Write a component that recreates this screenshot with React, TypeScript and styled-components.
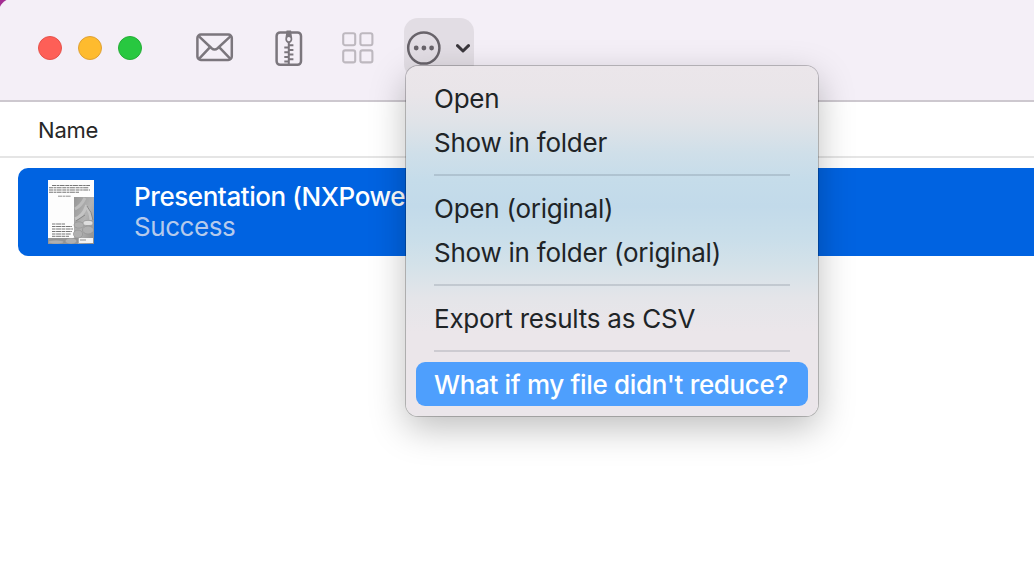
import React from 'react';
import styled, { createGlobalStyle } from 'styled-components';

const GlobalStyle = createGlobalStyle`
  * {
    box-sizing: border-box;
  }

  body {
    margin: 0;
    overflow: hidden;
    background: #a32d92;
    font-family: Inter, 'Liberation Sans', sans-serif;
  }
`;

// the window starts slightly outside of the viewport, only the tip of its rounded corner is visible
const Window = styled.div`
  width: 1037px;
  height: 584px;
  margin: -3px 0 0 -3px;
  padding: 3px 0 0 3px;
  border-top-left-radius: 20px;
  overflow: hidden;
  background: linear-gradient(#f4eff7 104px, #fff 104px);
`;

const Toolbar = styled.header`
  display: flex;
  align-items: center;
  height: 102px;
  padding: 0 0 4px 38px;
  border-bottom: 2px solid #cdc8cf;
`;

const TrafficLights = styled.div`
  display: flex;
  gap: 16px;
  margin-right: 54px;
`;

const Light = styled.span<{ $color: string; $edge: string }>`
  width: 24px;
  height: 24px;
  border-radius: 50%;
  border: 1px solid ${(props) => props.$edge};
  background: ${(props) => props.$color};
`;

const ToolIcon = styled.span<{ $gap: number; $color?: string }>`
  display: flex;
  margin-right: ${(props) => props.$gap}px;
  color: ${(props) => props.$color ?? '#7b767d'};
`;

const MoreButton = styled.div`
  position: relative;
  display: flex;
  align-items: center;
  gap: 14px;
  width: 70px;
  height: 60px;
  padding-left: 2px;
  border-radius: 14px;
  background: #e2dde4;
  color: #68636a;
`;

const Menu = styled.div`
  position: absolute;
  z-index: 1;
  top: 48px;
  left: 2px;
  width: 412px;
  padding: 10px;
  border-radius: 12px;
  background: linear-gradient(
    #ebe6ea 0,
    #e9e5e9 28px,
    #dfe3e8 58px,
    #cfdfe9 88px,
    #c5dcea 115px,
    #c2daea 140px,
    #c9deea 172px,
    #d5e2e9 202px,
    #e4e5e9 232px,
    #ebe6ea 266px
  );
  box-shadow:
    0 0 0 1px rgba(0, 0, 0, 0.22),
    0 12px 36px rgba(0, 0, 0, 0.26);
`;

const MenuItem = styled.div<{ $active?: boolean }>`
  height: 44px;
  padding: 0 18px;
  border-radius: 9px;
  line-height: 46px;
  font-size: 26px;
  font-weight: ${(props) => (props.$active ? 500 : 400)};
  letter-spacing: ${(props) => (props.$active ? -0.34 : -0.24)}px;
  white-space: nowrap;
  color: ${(props) => (props.$active ? '#fff' : '#202427')};
  background: ${(props) => (props.$active ? '#4e9ffd' : 'transparent')};
`;

const Divider = styled.div`
  height: 2px;
  margin: 10px 18px;
  background: rgba(60, 70, 90, 0.17);
`;

const ColumnHeader = styled.div`
  height: 56px;
  padding-left: 38px;
  border-bottom: 2px solid #e5e5e5;
  line-height: 57px;
  font-size: 22px;
  letter-spacing: -0.2px;
  color: #272727;
`;

const FileRow = styled.div`
  display: flex;
  align-items: center;
  height: 88px;
  margin: 10px 0 0 18px;
  padding-left: 30px;
  border-radius: 10px 0 0 10px;
  background: #0063e1;
`;

const FileInfo = styled.div`
  margin-left: 40px;
  font-size: 26px;
  line-height: 30px;
  white-space: nowrap;
`;

const FileName = styled.div`
  font-weight: 500;
  letter-spacing: -0.43px;
  color: #fff;
`;

const FileStatus = styled.div`
  letter-spacing: -0.45px;
  color: #b5caec;
`;

const MailIcon = () => (
  <svg width="38" height="30" viewBox="0 0 38 30" fill="none" stroke="currentColor" strokeWidth="2.5">
    <rect x="1.4" y="1.6" width="34.4" height="25.4" rx="3.5" />
    <path d="M3 3.4 L15.6 15.2 Q18.6 17.8 21.6 15.2 L34.4 3.4" />
    <path d="M3 25.8 L13.6 14.6 M34.4 25.8 L23.6 14.6" />
  </svg>
);

const ZipIcon = () => (
  <svg width="28" height="38" viewBox="0 0 28 38" fill="none" stroke="currentColor" strokeWidth="2.5">
    <rect x="1.6" y="3.4" width="24.4" height="32.4" rx="3.5" />
    <path d="M13.8 12 V35.5" strokeWidth="2" />
    <path
      d="M9.3 18.5 H13.8 M9.3 23.3 H13.8 M9.3 28 H13.8 M9.3 32.6 H13.8 M13.8 16.2 H18.4 M13.8 20.9 H18.4 M13.8 25.6 H18.4 M13.8 30.3 H18.4"
      strokeWidth="2"
    />
    <path d="M11.6 1.4 H16 L17.2 9 A3.5 4.2 0 1 1 10.4 9 Z" fill="currentColor" stroke="none" />
    <rect x="12.1" y="8" width="3.4" height="4.2" rx="1.6" fill="#f4eff7" stroke="none" />
  </svg>
);

const GridIcon = () => (
  <svg width="32" height="32" viewBox="0 0 32 32" fill="none" stroke="currentColor" strokeWidth="2.1">
    <rect x="1.2" y="1.2" width="12" height="12" rx="2" />
    <rect x="18.4" y="1.2" width="12" height="12" rx="2" />
    <rect x="1.2" y="18.4" width="12" height="12" rx="2" />
    <rect x="18.4" y="18.4" width="12" height="12" rx="2" />
  </svg>
);

const EllipsisIcon = () => (
  <svg width="36" height="36" viewBox="0 0 36 36">
    <circle cx="17.8" cy="18" r="15.6" fill="none" stroke="currentColor" strokeWidth="2.5" />
    <g fill="currentColor">
      <circle cx="10.2" cy="18" r="2.4" />
      <circle cx="17.9" cy="18" r="2.4" />
      <circle cx="25.6" cy="18" r="2.4" />
    </g>
  </svg>
);

const ChevronIcon = () => (
  <svg width="14" height="10" viewBox="0 0 14 10" fill="none" stroke="#3a363c" strokeWidth="2.9">
    <path d="M1.5 2.6 L7 8 L12.5 2.6" strokeLinecap="round" strokeLinejoin="round" />
  </svg>
);

const Thumbnail = () => (
  <svg width="46" height="64" viewBox="0 0 46 64">
    <defs>
      <linearGradient id="photo" x1="0" y1="0" x2="1" y2="1">
        <stop offset="0" stopColor="#959595" />
        <stop offset="0.5" stopColor="#b4b4b4" />
        <stop offset="1" stopColor="#8c8c8c" />
      </linearGradient>
    </defs>
    <rect width="46" height="64" fill="#fdfdfd" />
    <g stroke="#777" strokeWidth="1.1" strokeDasharray="4 0.6 2.5 0.5 5 0.7">
      <path d="M4 5.5 H42 M1 7.7 H41 M1 10 H42 M1 12.3 H31" />
      <path d="M10 16.2 H23" strokeWidth="0.8" />
    </g>
    <rect x="26" y="17" width="20" height="47" fill="url(#photo)" />
    <rect y="58" width="30" height="6" fill="#969696" />
    <path d="M27 29 Q33 26 37 18" stroke="#bdbdbd" strokeWidth="3" fill="none" />
    <path d="M27 39 Q35 36 38 27 Q42 30 43 40" stroke="#c4c4c4" strokeWidth="3" fill="none" />
    <path d="M39 26 Q44 32 45 40 M28 41 L37 35" stroke="#888" strokeWidth="1" fill="none" />
    <g fill="#b0b0b0" stroke="#8e8e8e" strokeWidth="0.6">
      <ellipse cx="31" cy="45" rx="5" ry="3.2" />
      <ellipse cx="40" cy="43" rx="5" ry="2.6" fill="#dedede" />
      <ellipse cx="40" cy="50" rx="5.6" ry="4" />
      <ellipse cx="30" cy="54" rx="4.6" ry="4" />
      <ellipse cx="8" cy="62" rx="8" ry="2" />
      <ellipse cx="23" cy="61" rx="6" ry="3" />
    </g>
    <path d="M0 42 H25 V58 H0 Z" fill="#fdfdfd" />
    <g stroke="#777" strokeWidth="1" strokeDasharray="3.5 0.6 5 0.5">
      <path d="M4 44 H17 M4 46.5 H24 M4 49 H25 M4 51.5 H24 M4 54 H23 M4 56.3 H21" />
    </g>
    <rect x="31" y="58" width="14" height="5" fill="#f3f3f3" />
    <path d="M32 60 H38" stroke="#777" strokeWidth="0.8" />
  </svg>
);

const App: React.FC = () => {
  return (
    <>
      <GlobalStyle />
      <Window>
        <Toolbar>
          <TrafficLights>
            <Light $color="#fe5f57" $edge="#e6524b" />
            <Light $color="#febb2e" $edge="#dfa135" />
            <Light $color="#28c840" $edge="#25ad37" />
          </TrafficLights>
          <ToolIcon $gap={41}>
            <MailIcon />
          </ToolIcon>
          <ToolIcon $gap={39}>
            <ZipIcon />
          </ToolIcon>
          <ToolIcon $gap={30} $color="#bdb8bf">
            <GridIcon />
          </ToolIcon>
          <MoreButton>
            <EllipsisIcon />
            <ChevronIcon />
            <Menu>
              <MenuItem>Open</MenuItem>
              <MenuItem>Show in folder</MenuItem>
              <Divider />
              <MenuItem>Open (original)</MenuItem>
              <MenuItem>Show in folder (original)</MenuItem>
              <Divider />
              <MenuItem>Export results as CSV</MenuItem>
              <Divider />
              <MenuItem $active>What if my file didn't reduce?</MenuItem>
            </Menu>
          </MoreButton>
        </Toolbar>
        <ColumnHeader>Name</ColumnHeader>
        <FileRow>
          <Thumbnail />
          <FileInfo>
            <FileName>Presentation (NXPowe</FileName>
            <FileStatus>Success</FileStatus>
          </FileInfo>
        </FileRow>
      </Window>
    </>
  );
};

export default App;
